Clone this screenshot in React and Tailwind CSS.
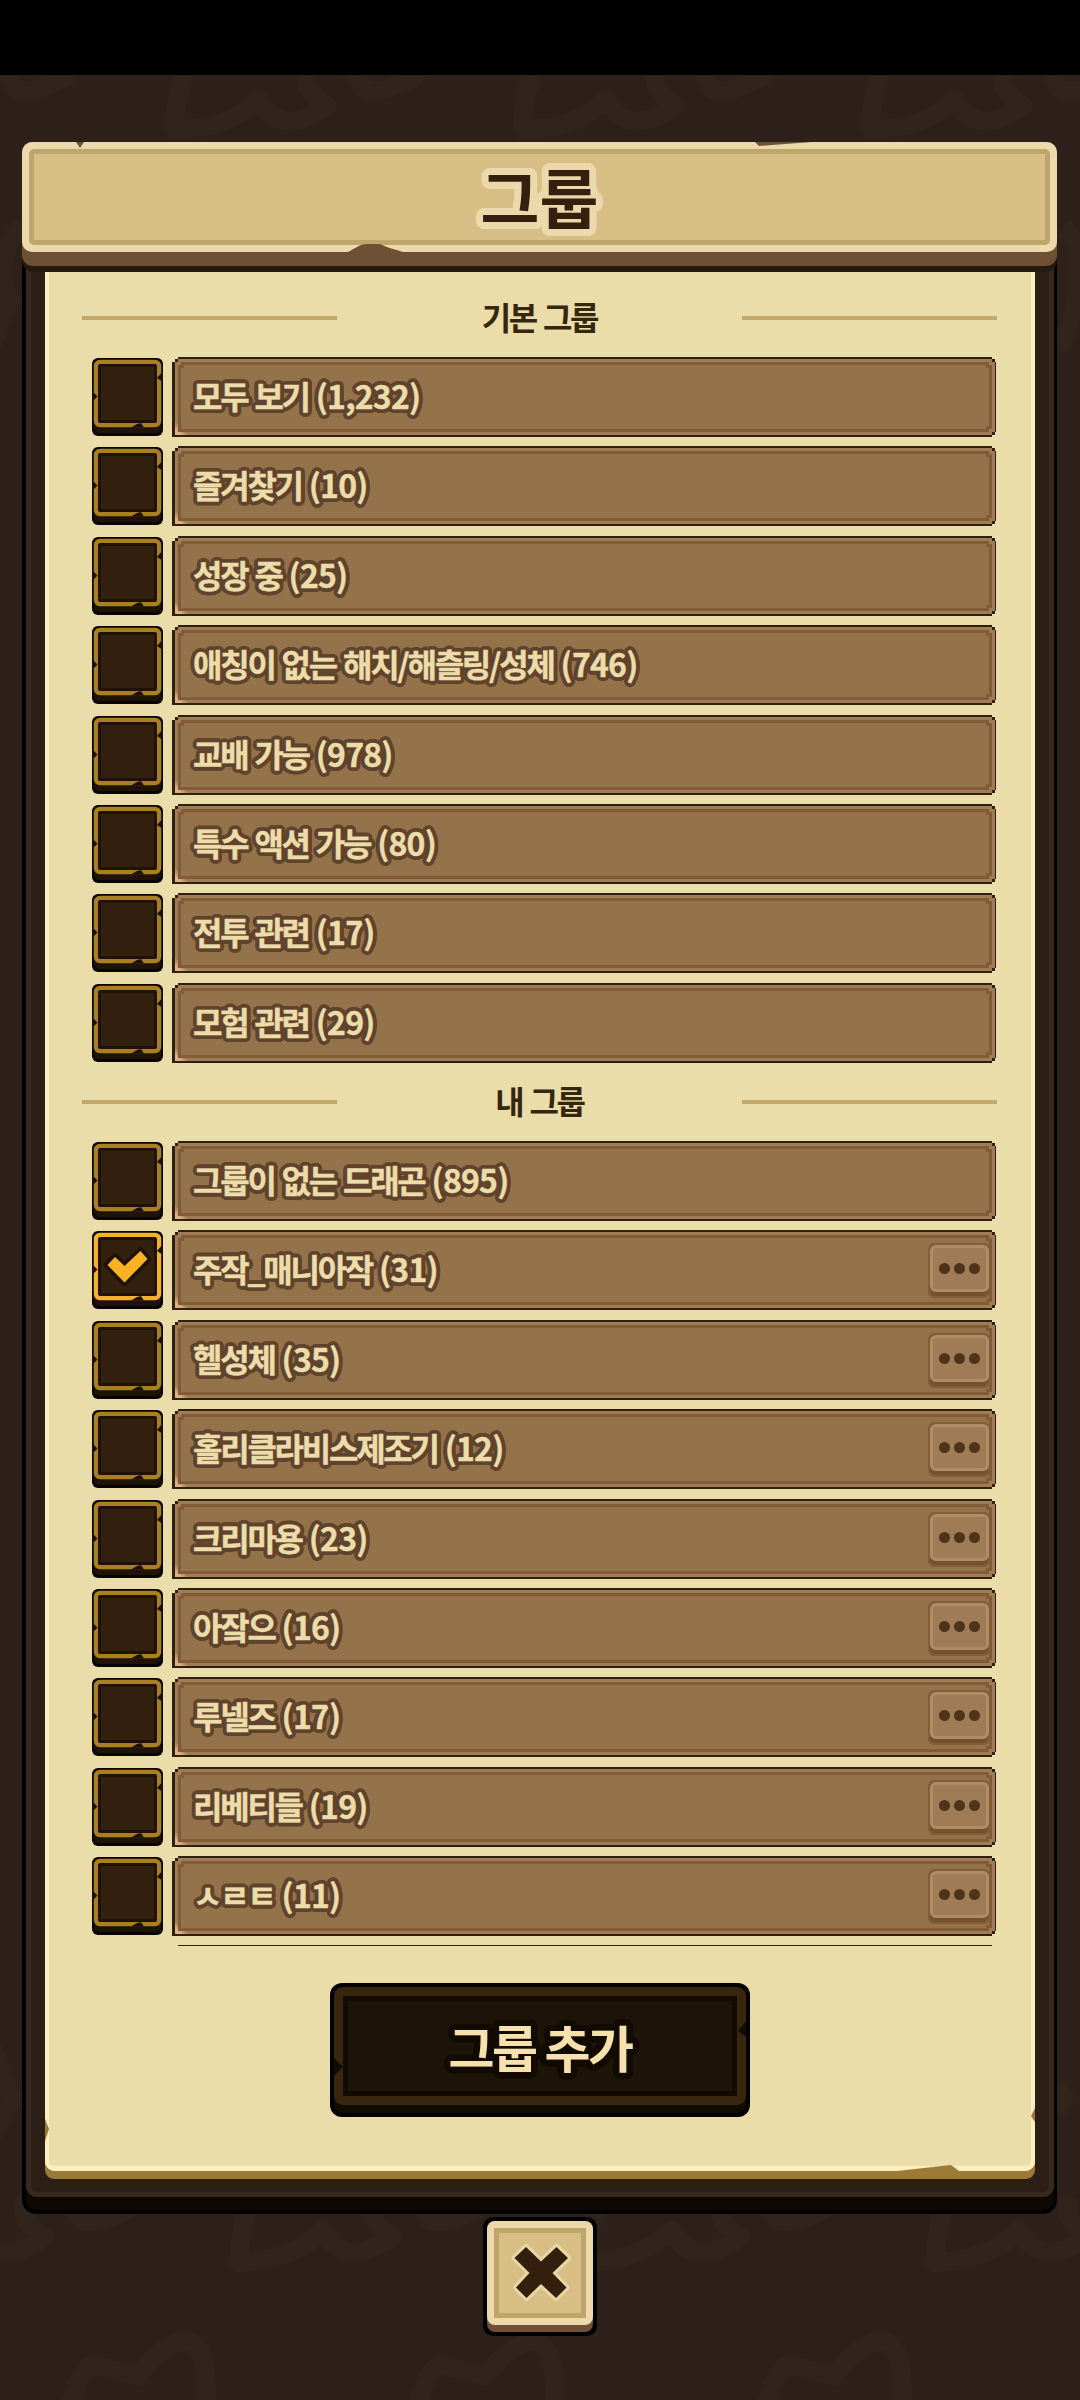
import React from 'react';

const basicGroups = [
  { name: '모두 보기', count: '1,232' },
  { name: '즐겨찾기', count: '10' },
  { name: '성장 중', count: '25' },
  { name: '애칭이 없는 해치/해츨링/성체', count: '746' },
  { name: '교배 가능', count: '978' },
  { name: '특수 액션 가능', count: '80' },
  { name: '전투 관련', count: '17' },
  { name: '모험 관련', count: '29' },
];

const myGroups = [
  { name: '그룹이 없는 드래곤', count: '895' },
  { name: '주작_매니아작', count: '31', checked: true, editable: true },
  { name: '헬성체', count: '35', editable: true },
  { name: '홀리클라비스제조기', count: '12', editable: true },
  { name: '크리마용', count: '23', editable: true },
  { name: '아잨으', count: '16', editable: true },
  { name: '루넬즈', count: '17', editable: true },
  { name: '리베티들', count: '19', editable: true },
  { name: 'ㅅㄹㅌ', count: '11', editable: true },
];

// rows are not a whole number of pixels apart, so round each one
const PITCH = 89.4;
const rowHeight = (i) => Math.round((i + 1) * PITCH) - Math.round(i * PITCH);

// rounded text outline made of shadows placed on two rings
const outline = (radius, color) =>
  [radius, radius / 2]
    .flatMap((r) =>
      Array.from({ length: 24 }, (_, i) => {
        const a = (i / 24) * Math.PI * 2;
        return `${(Math.cos(a) * r).toFixed(2)}px ${(Math.sin(a) * r).toFixed(2)}px 0 ${color}`;
      })
    )
    .join(', ');

const titleOutline = { textShadow: outline(7, '#ecd8aa') };
const rowOutline = { textShadow: outline(4, '#5f432d') };
const buttonOutline = { textShadow: outline(6.5, '#110b02') };

const Backdrop = () => (
  <svg className="absolute inset-0 -z-10" width="1080" height="2400" fill="none" stroke="#31241d" strokeWidth="19" strokeLinejoin="round">
    {[-348, 0, 348, 696].map((dx) => (
      <g key={dx} transform={`translate(${dx} 0)`}>
        <path d="M188 66C177 92 175 108 174 129C206 130 236 122 258 99C272 124 293 130 327 106C305 92 305 82 309 66" />
        <path d="M355 66C358 96 372 98 413 78L420 66" />
        <path d="M253 2197C242 2223 240 2239 239 2263C271 2261 301 2253 323 2230C337 2255 358 2261 392 2237C370 2223 370 2213 374 2197" />
        <path d="M420 2197C423 2227 437 2229 478 2209" />
        <path d="M69 2410C78 2372 88 2362 98 2366L138 2376C160 2345 180 2340 192 2342C204 2352 208 2370 206 2410" />
      </g>
    ))}
    <path d="M22 225C0 250 -2 280 10 300L-10 350M-10 2040L12 2098L-10 2140M1063 228C1080 240 1090 280 1060 350M1056 2085L1064 2096L1056 2115" />
  </svg>
);

const Header = () => (
  <div className="relative z-10 h-[130px] rounded-xl bg-[#261a0e]">
    <div className="h-[124px] rounded-[11px] bg-[#6e5034]">
      <div className="h-[110px] rounded-[10px] bg-[#ecd8aa] p-[7px]">
        <div className="flex h-full items-center justify-center rounded-[5px] border-5 border-[#bea66b] bg-[#d7be84] pb-[5px]">
          <h1 className="text-[64px] leading-none font-bold text-[#35200f]" style={titleOutline}>그룹</h1>
        </div>
      </div>
    </div>
    <svg className="absolute inset-0" width="1035" height="130" fill="#6e5034">
      <path d="M54 0H62L58 6ZM733 0H790L737 4ZM326 110C334 106 338 102 345 102H358C366 106 372 107 381 110Z" />
    </svg>
  </div>
);

const SectionTitle = ({ children }) => (
  <div className="flex h-[78px] items-center justify-between pr-[38px] pl-[37px]">
    <div className="h-1 w-[255px] bg-[#c1a96c]" />
    <h2 className="pb-[5px] text-[32px] leading-none font-bold tracking-[-2.3px] text-[#35260f] [word-spacing:2px]">{children}</h2>
    <div className="h-1 w-[255px] bg-[#c1a96c]" />
  </div>
);

const Checkbox = ({ checked }) => (
  <svg className="mt-px shrink-0" width="71" height="78" viewBox="0 0 71 78">
    <rect width="71" height="78" rx="6" fill="#060300" />
    <rect x="2" y="10" width="67" height="65" rx="5" fill="#1f1307" />
    <rect x="4" y="4" width="63" height="63" rx="4" fill="#33200f" stroke={checked ? '#f6b12c' : '#a97f20'} strokeWidth="4.5" />
    <rect x="7.5" y="7.5" width="56" height="56" rx="1" fill="none" stroke="#1f1307" strokeWidth="3" />
    <path d="M0 33L5.500 38.500L0 44ZM71 13L65 20L71 24ZM39 69.500L45 66L49 65L52 69.500Z" fill="#1a1005" />
    {checked && (
      <path
        d="M23 26L32.500 35L48.500 20L55.500 28L32.500 51.500L15.500 34Z"
        fill="#fbb324"
        stroke="#1f1307"
        strokeWidth="7"
        strokeLinejoin="round"
        className="[paint-order:stroke]"
      />
    )}
  </svg>
);

const MoreButton = () => (
  <button className="h-[55px] w-[62px] rounded-[7px] bg-[#75522b] pt-[2px] pl-[2px] shadow-[inset_0_0_0_2px_#835f38]">
    <div className="-mt-[6px] flex h-[47px] w-[59px] items-center justify-center gap-[4px] rounded-[6px] border-3 border-[#b08d66] bg-[#9f7c56]">
      <span className="size-[11px] rounded-full bg-[#4e341b]" />
      <span className="size-[11px] rounded-full bg-[#4e341b]" />
      <span className="size-[11px] rounded-full bg-[#4e341b]" />
    </div>
  </button>
);

const GroupRow = ({ group, height }) => (
  <div className="flex items-start gap-[9px] pr-[39px] pl-[47px]" style={{ height }}>
    <Checkbox checked={group.checked} />
    <div className="h-20 flex-1 bg-[#2e2110] pt-[2px] pr-px pb-[2px] pl-[3px] [clip-path:polygon(6px_0,calc(100%-4px)_0,calc(100%-4px)_2px,calc(100%-1px)_2px,calc(100%-1px)_5px,100%_5px,100%_calc(100%-5px),calc(100%-1px)_calc(100%-5px),calc(100%-1px)_calc(100%-2px),calc(100%-4px)_calc(100%-2px),calc(100%-4px)_100%,0_100%,0_5px,3px_5px,3px_2px,6px_2px)]">
      <div className="h-full bg-[#a07b57] bg-[linear-gradient(45deg,#e0b088_0,#e0b088_4px,#a07b57_10px)] p-[3px] [clip-path:polygon(3px_0,calc(100%-3px)_0,calc(100%-3px)_3px,100%_3px,100%_calc(100%-3px),calc(100%-3px)_calc(100%-3px),calc(100%-3px)_100%,0_100%,0_3px,3px_3px)]">
        <div className="h-full bg-[#815c34] p-[3px] [clip-path:polygon(3px_0,calc(100%-3px)_0,calc(100%-3px)_3px,100%_3px,100%_calc(100%-3px),calc(100%-3px)_calc(100%-3px),calc(100%-3px)_100%,0_100%,0_3px,3px_3px)]">
          <div className="flex h-full justify-between bg-[#95734a] pl-3 [clip-path:polygon(3px_0,calc(100%-3px)_0,calc(100%-3px)_3px,100%_3px,100%_calc(100%-3px),calc(100%-3px)_calc(100%-3px),calc(100%-3px)_100%,0_100%,0_3px,3px_3px)]">
            <span
              className="self-center pb-1 text-[32px] leading-none font-bold tracking-[-2.25px] whitespace-nowrap text-[#ecdcaa] [-webkit-text-stroke:0.4px_#ecdcaa] [word-spacing:2px]"
              style={rowOutline}
            >
              {group.name} <span className="tracking-[-0.8px]">({group.count})</span>
            </span>
            {group.editable && (
              <div className="-mr-px pt-[5px]">
                <MoreButton />
              </div>
            )}
          </div>
        </div>
      </div>
    </div>
  </div>
);

const AddButton = () => (
  <button className="relative h-[134px] w-[420px] rounded-xl bg-black p-1">
    <div className="h-[126px] rounded-[9px] bg-[#110b02]">
      <div className="h-[118px] rounded-[9px] bg-[#38260f] p-[9px]">
        <div className="flex h-full items-center justify-center border-5 border-[#110b02] bg-[#1e150a]">
          <span className="text-[50px] leading-none font-bold tracking-[-2.5px] text-[#f6e1ac]" style={buttonOutline}>그룹 추가</span>
        </div>
      </div>
    </div>
    <svg className="absolute inset-0" width="420" height="134" fill="#110b02">
      <path d="M4 75L13 84L4 93ZM416 38L408 48L416 54Z" />
    </svg>
  </button>
);

const CloseButton = () => (
  <button className="h-[119px] w-[114px] rounded-[10px] bg-black p-1">
    <div className="h-[111px] rounded-lg bg-[#6e5034]">
      <div className="h-[104px] rounded-lg bg-[#ecd8aa] p-[7px]">
        <div className="flex h-full items-center justify-center border-5 border-[#bea66b] bg-[#d7be84]">
          <svg width="66" height="66" viewBox="-34 -33 66 66">
            <path
              d="M-15 -26L0 -11.500L15.500 -26L27 -15L11.500 0L25.500 14.500L15 25L0 11L-14.500 25L-25 14.500L-11.500 0L-26.500 -15Z"
              fill="#35200f"
              stroke="#ead6a4"
              strokeWidth="6"
              strokeLinejoin="round"
              className="[paint-order:stroke]"
            />
          </svg>
        </div>
      </div>
    </div>
  </button>
);

export default function App() {
  return (
    <div className="relative isolate h-[2400px] w-[1080px] overflow-hidden bg-[#2e211b] font-['Noto_Sans_CJK_KR',sans-serif]">
      <Backdrop />
      <div className="h-[75px] bg-black" />
      <div className="mt-[67px] ml-[22px] w-[1035px]">
        <Header />
        <div className="-mt-[14px] h-[1956px] rounded-b-[14px] bg-black pr-[3px] pb-1 pl-1">
          <div className="h-[1952px] rounded-b-[11px] bg-[#0e0802]">
            <div className="h-[1939px] rounded-b-[11px] border-x-5 border-b-5 border-[#38281d] bg-[#2c2016] px-[14px] pt-[14px]">
              <div className="relative h-[1907px] rounded-b-[9px] bg-[#9b7a36]">
                <div className="flex h-[1899px] flex-col rounded-b-[10px] bg-[#eadda9] pt-[7px] shadow-[inset_4px_0_0_#fdeebf,inset_-4px_0_0_#fdeebf,inset_0_-5px_0_#fdeebf]">
                  <SectionTitle>기본 그룹</SectionTitle>
                  <div className="h-[706px]">
                    {basicGroups.map((group, i) => (
                      <GroupRow key={group.name} group={group} height={rowHeight(i)} />
                    ))}
                  </div>
                  <SectionTitle>내 그룹</SectionTitle>
                  <div>
                    {myGroups.map((group, i) => (
                      <GroupRow key={group.name} group={group} height={rowHeight(i)} />
                    ))}
                    {/* top edge of the next row, cut off by the list */}
                    <div className="mr-[43px] ml-[133px] h-px -translate-y-px bg-[#2e2110]" />
                  </div>
                  <div className="mt-[36px] flex justify-center">
                    <AddButton />
                  </div>
                </div>
                <svg className="absolute inset-0" width="990" height="1907" fill="#9b7a36">
                  <path d="M0 1847L4 1857L0 1869ZM990 1836L986 1844L990 1850ZM852 1899L906 1893L914 1899Z" />
                </svg>
              </div>
            </div>
          </div>
        </div>
        <div className="mt-[3px] flex justify-center pl-px">
          <CloseButton />
        </div>
      </div>
    </div>
  );
}
